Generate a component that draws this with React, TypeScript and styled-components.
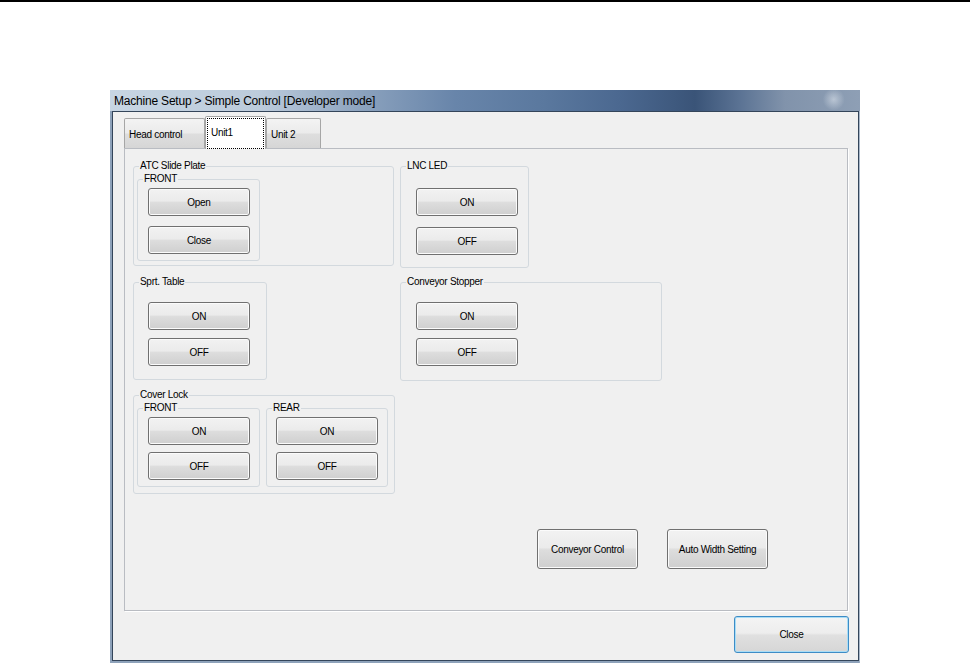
import React from 'react'
import styled, { createGlobalStyle } from 'styled-components'

const GlobalStyle = createGlobalStyle`
  html, body {
    margin: 0;
    padding: 0;
    background: #fff;
  }
  body {
    overflow: hidden;
    font-family: "Liberation Sans", Arial, sans-serif;
  }
`

const Page = styled.div`
  width: 970px;
  height: 663px;
  overflow: hidden;
  background: #fff;
`

const TopRule = styled.div`
  height: 2px;
  background: #000;
`

const Window = styled.section`
  width: 750px;
  margin: 88px 0 0 110px;
`

const TitleBar = styled.header`
  box-sizing: border-box;
  height: 21px;
  display: flex;
  align-items: center;
  padding-left: 4px;
  background:
    radial-gradient(circle at 96.5% 45%, rgba(225, 232, 240, 0.55) 0, rgba(225, 232, 240, 0) 11px),
    linear-gradient(90deg, #c7d5e3 0%, #bccbdb 20%, #8aa1bd 34%, #6885aa 46%, #5a789e 58%, #4b6890 68%, #3a5478 78%, #5b7394 84%, #8193ab 90%, #8e9fb5 100%);
  font: 12px "Liberation Sans", Arial, sans-serif;
  letter-spacing: -0.2px;
  color: #000;
  white-space: nowrap;
`

const Frame = styled.div`
  border-left: 2px solid #8ea2ba;
  border-right: 1px solid #a9b8ca;
  border-bottom: 3px solid #8ea2ba;
`

const Client = styled.div`
  display: flex;
  flex-direction: column;
  border: 1px solid #34455a;
  background: #f0f0f0;
  padding: 4px 10px 7px 11px;
`

const TabStrip = styled.nav`
  display: flex;
  align-items: flex-start;
  height: 32px;
`

const Tab = styled.div<{ $active?: boolean; $w: number }>`
  box-sizing: border-box;
  display: flex;
  width: ${p => p.$w}px;
  height: ${p => (p.$active ? 33 : 30)}px;
  margin-top: ${p => (p.$active ? 0 : 2)}px;
  padding: 1px 1px 0;
  border: 1px solid #a6a6a6;
  border-bottom: none;
  border-radius: 2px 2px 0 0;
  background: ${p =>
    p.$active ? '#fff' : 'linear-gradient(#f3f3f3 0%, #ebebeb 48%, #dedede 52%, #d6d6d6 100%)'};
  position: relative;
  z-index: ${p => (p.$active ? 2 : 0)};
`

const TabLabel = styled.span<{ $focus?: boolean }>`
  flex: 1;
  display: flex;
  align-items: center;
  padding: 0 0 ${p => (p.$focus ? 3 : 0)}px ${p => (p.$focus ? 3 : 2)}px;
  border: 1px dotted ${p => (p.$focus ? '#000' : 'transparent')};
  font: 10px "Liberation Sans", Arial, sans-serif;
  letter-spacing: -0.3px;
  color: #000;
  white-space: nowrap;
`

const Panel = styled.div`
  box-sizing: border-box;
  height: 463px;
  border: 1px solid #b9bcc2;
  box-shadow: 1px 1px 0 #fff;
  background: #f0f0f0;
  padding: 11px 0 0 8px;
  position: relative;
  z-index: 1;
`

const Layout = styled.div`
  display: grid;
  grid-template-columns: 261px 262px;
  grid-template-rows: 116px 113px auto;
  column-gap: 6px;
  align-items: start;
  justify-items: start;
`

/* the legend sits after the fieldset's left padding, so pull it back to 6px from the border */
const Group = styled.fieldset<{ $w: number; $pt: number; $pb: number; $pl: number }>`
  box-sizing: border-box;
  width: ${p => p.$w}px;
  min-width: 0;
  margin: 0;
  padding: ${p => `${p.$pt}px 0 ${p.$pb}px ${p.$pl}px`};
  border: 1px solid #d3d9de;
  border-radius: 3px;

  & > legend {
    margin-left: ${p => 5 - p.$pl}px;
  }
`

const Legend = styled.legend`
  padding: 0 1px;
  font: 10px/12px "Liberation Sans", Arial, sans-serif;
  letter-spacing: -0.3px;
  color: #000;
  white-space: nowrap;
`

const SubRow = styled.div`
  display: flex;
  gap: 6px;
`

const ButtonStack = styled.div<{ $gap: number }>`
  display: flex;
  flex-direction: column;
  gap: ${p => p.$gap}px;
`

const Button = styled.button<{ $w?: number; $h?: number }>`
  box-sizing: border-box;
  width: ${p => p.$w ?? 102}px;
  height: ${p => p.$h ?? 28}px;
  padding: 0;
  border: 1px solid #707070;
  border-radius: 3px;
  background: linear-gradient(#f2f2f2 0%, #ebebeb 46%, #dddddd 52%, #cfcfcf 100%);
  box-shadow: inset 0 0 0 1px #fbfbfb;
  font: 10px "Liberation Sans", Arial, sans-serif;
  letter-spacing: -0.3px;
  color: #000;
  white-space: nowrap;
`

const DefaultButton = styled(Button)`
  border-color: #3d8cc6;
  background: linear-gradient(#f4f4f4 0%, #ededed 46%, #e0e0e0 52%, #d6d6d6 100%);
  box-shadow: inset 0 0 0 1px #a9ddf6;
`

const ActionRow = styled.div`
  display: flex;
  gap: 29px;
  margin-top: 35px;
  padding-left: 404px;
`

const Footer = styled.footer`
  display: flex;
  justify-content: flex-end;
  margin: 5px -1px 0 0;
`

type PairProps = { a: string; b: string; gap: number }

const ButtonPair = ({ a, b, gap }: PairProps) => (
  <ButtonStack $gap={gap}>
    <Button>{a}</Button>
    <Button>{b}</Button>
  </ButtonStack>
)

export default function App() {
  return (
    <Page>
      <GlobalStyle />
      <TopRule />
      <Window>
        <TitleBar>Machine Setup &gt; Simple Control [Developer mode]</TitleBar>
        <Frame>
          <Client>
            <TabStrip>
              <Tab $w={81}>
                <TabLabel>Head control</TabLabel>
              </Tab>
              <Tab $w={61} $active>
                <TabLabel $focus>Unit1</TabLabel>
              </Tab>
              <Tab $w={55}>
                <TabLabel>Unit 2</TabLabel>
              </Tab>
            </TabStrip>

            <Panel>
              <Layout>
                <Group $w={261} $pt={1} $pb={4} $pl={3}>
                  <Legend>ATC Slide Plate</Legend>
                  <Group $w={123} $pt={3} $pb={6} $pl={10}>
                    <Legend>FRONT</Legend>
                    <ButtonPair a="Open" b="Close" gap={10} />
                  </Group>
                </Group>

                <Group $w={129} $pt={16} $pb={12} $pl={15}>
                  <Legend>LNC LED</Legend>
                  <ButtonPair a="ON" b="OFF" gap={11} />
                </Group>

                <Group $w={134} $pt={14} $pb={13} $pl={14}>
                  <Legend>Sprt. Table</Legend>
                  <ButtonPair a="ON" b="OFF" gap={8} />
                </Group>

                <Group $w={262} $pt={14} $pb={14} $pl={15}>
                  <Legend>Conveyor Stopper</Legend>
                  <ButtonPair a="ON" b="OFF" gap={8} />
                </Group>

                <Group $w={262} $pt={1} $pb={6} $pl={3}>
                  <Legend>Cover Lock</Legend>
                  <SubRow>
                    <Group $w={123} $pt={3} $pb={6} $pl={10}>
                      <Legend>FRONT</Legend>
                      <ButtonPair a="ON" b="OFF" gap={7} />
                    </Group>
                    <Group $w={122} $pt={3} $pb={6} $pl={9}>
                      <Legend>REAR</Legend>
                      <ButtonPair a="ON" b="OFF" gap={7} />
                    </Group>
                  </SubRow>
                </Group>
              </Layout>

              <ActionRow>
                <Button $w={101} $h={40}>Conveyor Control</Button>
                <Button $w={101} $h={40}>Auto Width Setting</Button>
              </ActionRow>
            </Panel>

            <Footer>
              <DefaultButton $w={115} $h={37}>Close</DefaultButton>
            </Footer>
          </Client>
        </Frame>
      </Window>
    </Page>
  )
}
